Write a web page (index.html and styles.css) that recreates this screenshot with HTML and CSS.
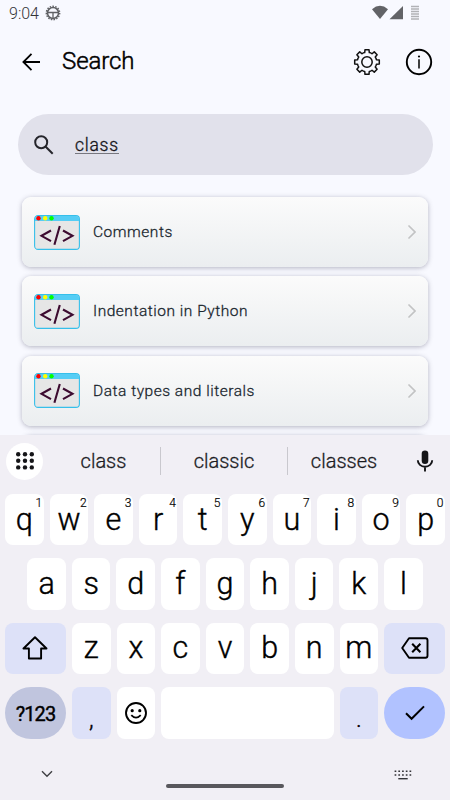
FILE: index.html
```html
<!DOCTYPE html>
<html lang="en">
<head>
<meta charset="utf-8">
<title>Search</title>
<link rel="stylesheet" href="styles.css">
</head>
<body>
<svg width="0" height="0" class="defs">
  <symbol id="code" viewBox="0 0 46 35">
    <rect x=".6" y=".6" width="44.8" height="33.8" rx="3.5" fill="#e6e6e6" stroke="#36bfea" stroke-width="1.1"/>
    <path d="M1 6V4a3 3 0 0 1 3-3h38a3 3 0 0 1 3 3v2z" fill="#55cdf5"/>
    <circle cx="4.5" cy="3.3" r="2.2" fill="#f00"/><circle cx="11.2" cy="3.3" r="2.2" fill="#ff0"/><circle cx="17.5" cy="3.3" r="2.2" fill="#0f0"/>
    <path d="M17 15.500 7.500 20.800 17 26.100M29 15.500 38.500 20.800 29 26.100M25.800 11 20.400 29.800" fill="none" stroke="#3d0b30" stroke-width="2.1"/>
  </symbol>
  <symbol id="chevron" viewBox="0 0 8 14"><path d="M1 1l6 6-6 6" fill="none" stroke="#c2c3c4" stroke-width="1.7" stroke-linecap="round"/></symbol>
</svg>
<section class="app">
  <div class="status">
    <span class="time">9:04</span>
    <svg class="debug" width="16" height="16" viewBox="-8 -8 16 16" fill="none" stroke="#5f6064">
      <circle r="5.500" stroke-width="1.5"/><circle r="6.700" stroke-width="1.4" stroke-dasharray="1.5 1.3"/><path d="M-5.500-.5H5.500M0-.5v6" stroke-width="1.3"/>
    </svg>
    <svg class="signal" width="50" height="16" viewBox="0 0 50 16">
      <path d="M1 4.200Q9-2.500 17 4.200L9 14z" fill="#626367"/>
      <path d="M32 1v13.200H18.500z" fill="#626367"/>
      <path d="M40 1.500h8M40 4h8M40 6.500h8M40 9h8M40 11.500h8M40 14h8" stroke="#b1b2b6" stroke-width="1.300"/>
    </svg>
  </div>
  <header class="bar">
    <svg width="18" height="18" viewBox="0 0 18 18" fill="none" stroke="#000" stroke-width="1.800"><path d="M18 9H1.500M9.500 .9 1.400 9l8.100 8.100"/></svg>
    <h1>Search</h1>
    <svg class="gear" width="28" height="28" viewBox="-14 -14 28 28" fill="none" stroke="#111" stroke-width="1.500" stroke-linejoin="round">
      <path d="M-2.300-9.400-2-12.300H2L2.300-9.400Q3.700-9.300 5.020-8.270L7.280-10.110 10.110-7.280 8.270-5.020Q9.300-3.700 9.400-2.300L12.300-2V2L9.400 2.300Q9.300 3.700 8.270 5.020L10.110 7.280 7.280 10.110 5.020 8.270Q3.700 9.300 2.300 9.400L2 12.300H-2L-2.300 9.400Q-3.700 9.300-5.020 8.270L-7.280 10.110-10.110 7.280-8.270 5.020Q-9.300 3.700-9.400 2.300L-12.300 2V-2L-9.400-2.300Q-9.300-3.700-8.270-5.020L-10.110-7.280-7.280-10.110-5.020-8.270Q-3.700-9.300-2.300-9.400z"/><circle r="5.200"/>
    </svg>
    <svg width="28" height="28" viewBox="-14 -14 28 28" fill="none" stroke="#000"><circle r="12.200" stroke-width="1.900"/><path d="M0-2.800V6.500" stroke-width="1.500"/><circle cy="-5.500" r="1.100" fill="#000" stroke="none"/></svg>
  </header>
  <div class="search">
    <svg width="20" height="20" viewBox="0 0 20 20" fill="none" stroke="#25252b" stroke-width="2"><circle cx="7.200" cy="7.200" r="6"/><path d="M11.500 11.500 18.700 18.700"/></svg>
    <span class="query">class</span>
  </div>
  <div class="cards">
    <article class="card"><svg class="code"><use href="#code"/></svg><span>Comments</span><svg class="chev"><use href="#chevron"/></svg></article>
    <article class="card"><svg class="code"><use href="#code"/></svg><span>Indentation in Python</span><svg class="chev"><use href="#chevron"/></svg></article>
    <article class="card"><svg class="code"><use href="#code"/></svg><span>Data types and literals</span><svg class="chev"><use href="#chevron"/></svg></article>
    <article class="card"></article>
  </div>
</section>
<section class="keyboard">
  <div class="suggest">
    <div class="apps"><svg width="20" height="20" viewBox="0 0 20 20" fill="#151518"><circle cx="3.200" cy="3.200" r="2.200"/><circle cx="10" cy="3.200" r="2.200"/><circle cx="16.800" cy="3.200" r="2.200"/><circle cx="3.200" cy="9.800" r="2.200"/><circle cx="10" cy="9.800" r="2.200"/><circle cx="16.800" cy="9.800" r="2.200"/><circle cx="3.200" cy="16.400" r="2.200"/><circle cx="10" cy="16.400" r="2.200"/><circle cx="16.800" cy="16.400" r="2.200"/></svg></div>
    <div class="words"><span>class</span><span>classic</span><span>classes</span></div>
    <svg class="mic" width="18" height="22" viewBox="0 0 18 22"><rect x="5.700" y=".5" width="6.600" height="13.500" rx="3.300" fill="#151518"/><path d="M1.800 10.300a7.200 6.500 0 0 0 14.400 0M9 17v4.500" fill="none" stroke="#151518" stroke-width="1.900"/></svg>
  </div>
  <div class="rows">
    <div class="row">
      <div class="key">q<sup>1</sup></div><div class="key">w<sup>2</sup></div><div class="key">e<sup>3</sup></div><div class="key">r<sup>4</sup></div><div class="key">t<sup>5</sup></div><div class="key">y<sup>6</sup></div><div class="key">u<sup>7</sup></div><div class="key">i<sup>8</sup></div><div class="key">o<sup>9</sup></div><div class="key">p<sup>0</sup></div>
    </div>
    <div class="row home">
      <div class="key">a</div><div class="key">s</div><div class="key">d</div><div class="key">f</div><div class="key">g</div><div class="key">h</div><div class="key">j</div><div class="key">k</div><div class="key">l</div>
    </div>
    <div class="row">
      <div class="key wide tint"><svg width="26" height="24" viewBox="0 0 26 24" fill="none" stroke="#000" stroke-width="1.900" stroke-linejoin="round"><path d="M13 1.300 1.500 12.500h5.400v10h12.200v-10h5.400z"/></svg></div>
      <div class="key">z</div><div class="key">x</div><div class="key">c</div><div class="key">v</div><div class="key">b</div><div class="key">n</div><div class="key">m</div>
      <div class="key wide tint"><svg width="28" height="22" viewBox="0 0 28 22" fill="none" stroke="#000" stroke-width="1.900" stroke-linejoin="round"><path d="M8 1.200h16.500a2 2 0 0 1 2 2v15.600a2 2 0 0 1-2 2H8L1.200 11z"/><path d="M11.200 6.800l8.200 8.400M19.400 6.800l-8.200 8.400" stroke-width="2.100"/></svg></div>
    </div>
    <div class="row">
      <div class="key wide symbols">?123</div>
      <div class="key tint punct">,</div>
      <div class="key"><svg width="24" height="24" viewBox="0 0 24 24"><circle cx="12" cy="12" r="10" fill="none" stroke="#000" stroke-width="1.900"/><circle cx="8.200" cy="9.700" r="1.600"/><circle cx="15.800" cy="9.700" r="1.600"/><path d="M7.300 14.100q4.700 5 9.400 0" fill="none" stroke="#000" stroke-width="1.800"/></svg></div>
      <div class="key space"></div>
      <div class="key tint punct dot">.</div>
      <div class="key wide enter"><svg width="20" height="16" viewBox="0 0 20 16" fill="none" stroke="#000" stroke-width="2"><path d="M1 8.200l5.600 5.600L19 1.400"/></svg></div>
    </div>
  </div>
  <footer class="nav">
    <svg width="12" height="8" viewBox="0 0 12 8" fill="none" stroke="#3f3f43" stroke-width="1.400"><path d="M1 1.200l5 5 5-5"/></svg>
    <div class="pill"></div>
    <svg width="18" height="10" viewBox="0 0 18 10" fill="none" stroke="#333337" stroke-width="1.500"><path d="M.6 1.200h18M.6 4.900h18" stroke-dasharray="1.700 2.030"/><path d="M4.300 8.700h9.400" stroke-width="1.400"/></svg>
  </footer>
</section>
</body>
</html>
```
FILE: styles.css
```css
* { box-sizing: border-box; }
body {
  margin: 0;
  width: 450px;
  height: 800px;
  overflow: hidden;
  font-family: Roboto, "Liberation Sans", sans-serif;
  background: #f8f9ff;
  color: #000;
}
svg { display: block; flex: none; }
.defs { position: absolute; }
.app { height: 435px; overflow: hidden; }
.status { display: flex; height: 27px; padding: 5px 28px 0 9px; }
.time { font-size: 16px; line-height: 18px; font-weight: 300; color: #333438; width: 36px; }
.signal { margin-left: auto; margin-right: 1px; }
.bar { display: flex; align-items: center; height: 69px; padding: 0 17px 0 22px; }
.bar h1 { margin: -1px auto 0 22px; font-size: 24px; font-weight: 300; letter-spacing: -0.1px; -webkit-text-stroke: 0.5px #000; }
.gear { margin-right: 24px; }
.search {
  display: flex;
  align-items: center;
  height: 61px;
  margin: 18px 17px 0 18px;
  padding-left: 16px;
  border-radius: 31px;
  background: #e1e1eb;
}
.query {
  margin-left: 21px;
  font-size: 17.5px;
  line-height: 20px;
  letter-spacing: 0.75px;
  color: #17171c;
  border-bottom: 1px solid #77777f;
  height: 19px;
  margin-top: -1px;
  font-weight: 300;
  -webkit-text-stroke: 0.35px #17171c;
}
.cards { display: flex; flex-direction: column; gap: 9.3px; padding: 22px 22px 0; }
.card {
  display: flex;
  align-items: center;
  flex: none;
  height: 70px;
  padding: 0 12px;
  border-radius: 9px;
  background: linear-gradient(#fbfbfb, #ebeef0);
  box-shadow: 0 1px 5px rgba(50, 50, 75, 0.35);
  font-size: 15.5px;
  font-weight: 300;
  letter-spacing: 0.52px;
  color: #1c2830;
  -webkit-text-stroke: 0.3px #1c2830;
}
.code { width: 46px; height: 35px; margin-right: 13px; }
.chev { width: 8px; height: 14px; margin-left: auto; }
.keyboard { height: 365px; background: #f1eff5; }
.suggest { display: flex; align-items: center; height: 51px; padding: 1px 16px 0 6px; }
.apps {
  display: flex;
  align-items: center;
  justify-content: center;
  width: 37px;
  height: 37px;
  border-radius: 50%;
  background: #fff;
}
.words { display: grid; grid-template-columns: 113px 127px 113px; margin-left: 4px; font-size: 20px; font-weight: 300; color: #1b1b1f; -webkit-text-stroke: 0.3px #1b1b1f; }
.words span { line-height: 27px; padding-top: 1px; text-align: center; }
.words span + span { border-left: 1px solid #c9c8ce; }
.mic { margin-left: auto; }
.rows { display: grid; gap: 13px; padding: 8px 5px 0; }
.row { display: flex; gap: 6px; height: 51.4px; }
.home { padding: 0 22.3px; }
.key {
  position: relative;
  display: flex;
  align-items: center;
  justify-content: center;
  flex: 1;
  min-width: 0;
  border-radius: 8px;
  background: #fff;
  font-size: 30.5px;
  font-weight: 300;
  line-height: 50px;
  -webkit-text-stroke: 0.4px #000;
}
.key sup { position: absolute; top: 3px; right: 1.5px; font-size: 12px; line-height: 13px; -webkit-text-stroke-width: 0.2px; }
.wide { flex: 0 0 60.9px; }
.tint { background: #dde1f8; }
.symbols { padding-top: 2px; border-radius: 26px; background: #c0c5de; font-size: 20px; font-weight: 400; letter-spacing: -0.9px; }
.space { flex: 0 0 172.4px; }
.punct { font-size: 24px; padding-top: 12px; }
.enter { border-radius: 26px; background: #b1c2ff; }
.nav { display: flex; justify-content: space-between; padding: 31px 38px 0 41px; }
.pill { width: 118px; height: 4.5px; margin: 14px 0 0 3px; border-radius: 3px; background: #58575c; }
```
